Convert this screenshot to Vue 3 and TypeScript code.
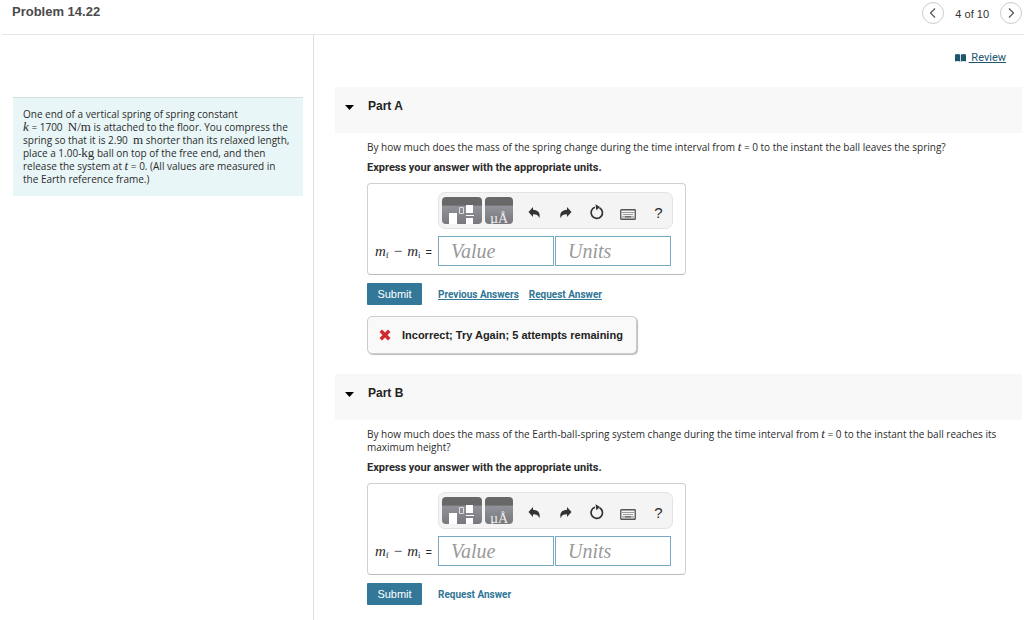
<script setup lang="ts">
import { reactive } from 'vue'

interface Part {
  id: string
  title: string
  before: string
  after: string
  hasPrevious: boolean
  feedback: string
}

const parts: Part[] = [
  {
    id: 'a',
    title: 'Part A',
    before: 'By how much does the mass of the spring change during the time interval from',
    after: 'to the instant the ball leaves the spring?',
    hasPrevious: true,
    feedback: 'Incorrect; Try Again; 5 attempts remaining',
  },
  {
    id: 'b',
    title: 'Part B',
    before: 'By how much does the mass of the Earth-ball-spring system change during the time interval from',
    after: 'to the instant the ball reaches its maximum height?',
    hasPrevious: false,
    feedback: '',
  },
]

const answers = reactive<Record<string, { value: string; units: string }>>({
  a: { value: '', units: '' },
  b: { value: '', units: '' },
})
const open = reactive<Record<string, boolean>>({ a: true, b: true })
</script>

<template>
  <div class="page">
    <header class="top">
      <h1>Problem 14.22</h1>
      <nav class="pager" aria-label="Problems">
        <button class="round" type="button" aria-label="Previous problem">
          <svg width="10" height="12" viewBox="0 0 10 12"><path d="M7 1.5 2.5 6 7 10.5" /></svg>
        </button>
        <span>4 of 10</span>
        <button class="round" type="button" aria-label="Next problem">
          <svg width="10" height="12" viewBox="0 0 10 12"><path d="M3 1.5 7.5 6 3 10.5" /></svg>
        </button>
      </nav>
    </header>

    <div class="columns">
      <aside class="side">
        <p class="statement">
          One end of a vertical spring of spring constant
          <span class="keep"><i class="var">k</i> = 1700 &nbsp;<span class="unit">N/m</span></span> is attached to the floor. You compress the spring so that it is
          <span class="keep">2.90 &nbsp;<span class="unit">m</span></span> shorter than its relaxed length, place a
          <span class="keep">1.00-<span class="unit">kg</span></span> ball on top of the free end, and then release the system at
          <span class="keep"><i class="var">t</i> = 0</span>. (All values are measured in the Earth reference frame.)
        </p>
      </aside>

      <main class="work">
        <div class="review">
          <svg width="11" height="8" viewBox="0 0 11 8" aria-hidden="true">
            <path d="M0 .6Q2.7-.5 5.1.6V7.5Q2.7 6.5 0 7.5ZM5.9.6Q8.5-.5 11 .6V7.5Q8.5 6.5 5.9 7.5Z" />
          </svg>
          <a href="#review">&nbsp;Review</a>
        </div>

        <section v-for="part in parts" :key="part.id" class="part">
          <h2>
            <button type="button" class="toggle" :aria-expanded="open[part.id]" @click="open[part.id] = !open[part.id]">
              <svg width="9" height="5" viewBox="0 0 9 5" aria-hidden="true"><path d="M0 0h9L4.500 5Z" /></svg>
              <span>{{ part.title }}</span>
            </button>
          </h2>

          <div v-if="open[part.id]" class="body">
            <p class="question">{{ part.before }} <span class="keep"><i class="var">t</i> = 0</span> {{ part.after }}</p>
            <p class="strong">Express your answer with the appropriate units.</p>

            <div class="answer">
              <div class="tools" role="toolbar" aria-label="Answer tools">
                <button type="button" class="tile wide" aria-label="Templates">
                  <svg width="40" height="27" viewBox="0 0 40 27">
                    <path d="M7 16h8v11H7ZM24 8h7v8h-7ZM24 18h8v1h-8ZM24 21h7v6h-7Z" fill="#fff" />
                    <path d="M17.500 10.500h4v6h-4Z" fill="none" stroke="#ddd" />
                  </svg>
                </button>
                <button type="button" class="tile" aria-label="Units"><span class="glyphs">µÅ</span></button>
                <span class="actions">
                  <button type="button" aria-label="Undo">
                    <svg width="13" height="13" viewBox="0 0 13 13"><path d="M5 1v2.800C10 4 12.800 7 11.300 12.200 10.300 9.200 8.500 8.300 5 8.300v2.700L.5 6Z" /></svg>
                  </button>
                  <button type="button" aria-label="Redo">
                    <svg width="13" height="13" viewBox="0 0 13 13"><path d="M8 1v2.800C3 4 .2 7 1.700 12.200 2.700 9.200 4.500 8.300 8 8.300v2.700L12.500 6Z" /></svg>
                  </button>
                  <button type="button" aria-label="Reset">
                    <svg width="15" height="16" viewBox="0 0 15 16">
                      <path d="M10.500 3.700A5.700 5.700 0 1 1 6 3.300" fill="none" stroke="#333" stroke-width="1.700" />
                      <path d="M6.500.3 11 3 7.300 6.300Z" />
                    </svg>
                  </button>
                  <button type="button" aria-label="Keyboard shortcuts">
                    <svg class="keys" width="16" height="11" viewBox="0 0 16 11">
                      <rect x=".75" y=".75" width="14.500" height="9.500" rx=".6" fill="#f4f4f4" stroke="#555" stroke-width="1.300" />
                      <path d="M2.500 3.500h11M3.500 5.500h10" fill="none" stroke="#444" stroke-width="1.200" stroke-dasharray="1 1" />
                      <path d="M2.500 7.800h1M4.500 7.800h7M12.500 7.800h1" fill="none" stroke="#444" stroke-width="1.200" />
                    </svg>
                  </button>
                  <button type="button" class="help" aria-label="Help">?</button>
                </span>
              </div>
              <label class="lhs" :for="`value-${part.id}`">
                <span><i>m</i><sub>f</sub></span><span>−</span><span><i>m</i><sub>i</sub></span><span class="eq">=</span>
              </label>
              <div class="fields">
                <input :id="`value-${part.id}`" v-model="answers[part.id].value" type="text" placeholder="Value">
                <input v-model="answers[part.id].units" type="text" placeholder="Units" aria-label="Units">
              </div>
            </div>

            <div class="row">
              <button type="button" class="submit">Submit</button>
              <a v-if="part.hasPrevious" href="#previous">Previous Answers</a>
              <a href="#request" :class="{ plain: !part.hasPrevious }">Request Answer</a>
            </div>

            <div v-if="part.feedback" class="feedback" role="status">
              <svg width="12" height="12" viewBox="0 0 12 12" aria-hidden="true"><path d="M3 0.500 6 3.500 9 .5 11.500 3 8.500 6 11.500 9 9 11.500 6 8.500 3 11.500.5 9 3.500 6 .5 3Z" /></svg>
              <span>{{ part.feedback }}</span>
            </div>
          </div>
        </section>
      </main>
    </div>
  </div>
</template>

<style>
body { margin: 0; background: #fff; }
</style>

<style scoped>
.page {
  min-height: 100vh;
  display: flex;
  flex-direction: column;
  color: #2b2b2b;
  font: 11px/13px Roboto, "Liberation Sans", sans-serif;
}
* { box-sizing: border-box; }
h1, h2, p { margin: 0; }
button { font-family: "Liberation Sans", Arial, sans-serif; color: inherit; cursor: pointer; }
svg { display: block; }
.top {
  display: flex;
  justify-content: space-between;
  align-items: flex-start;
  height: 35px;
  margin-left: 2px;
  padding: 2px 2px 0 10px;
  border-bottom: 1px solid #e4e6e8;
  font-family: "Liberation Sans", Arial, sans-serif;
}
h1 { font-size: 13px; line-height: 20px; color: #4a4a4a; }
.pager { display: flex; align-items: center; gap: 11px; font-size: 11px; color: #333; }
.pager span { padding-top: 2px; }
.round {
  display: grid;
  place-items: center;
  width: 22px;
  height: 22px;
  padding: 0;
  border: 1px solid #ccc;
  border-radius: 50%;
  background: #fff;
}
.round path { fill: none; stroke: #555; stroke-width: 1.2; }
.columns { flex: 1; display: grid; grid-template-columns: 314px 1fr; }
.side { padding: 62px 10px 0 13px; border-right: 1px solid #d9dfe5; }
.statement, .question { font: 10px/13px "Open Sans", "Liberation Sans", sans-serif; }
.statement {
  padding: 10px;
  border-top: 1px solid #d5dcdc;
  background: #e9f6f7;
}
.keep { white-space: nowrap; }
.var, .unit { font-family: "Liberation Serif", serif; font-size: 13px; line-height: 10px; }
.work { padding: 16px 2px 15px 21px; }
.review { display: flex; align-items: center; gap: 3px; justify-content: flex-end; padding: 0 16px 23px 0; }
.review a { color: #1d566d; }
.review path { fill: #1d566d; }
.part + .part { margin-top: 20px; }
h2 { background: #f8f8f8; font-size: 12px; }
.toggle {
  display: flex;
  align-items: center;
  gap: 14px;
  width: 100%;
  height: 46px;
  padding: 0 0 8px 10px;
  border: 0;
  background: none;
  font-size: 12px;
  font-weight: bold;
  color: #222;
}
.toggle svg { margin-top: 3px; }
.body { padding: 8px 20px 0 32px; }
.strong { margin-top: 7px; font-weight: bold; }
.answer {
  display: grid;
  grid-template-columns: 62px 235px;
  row-gap: 7px;
  width: 319px;
  margin-top: 9px;
  padding: 8px;
  border: 1px solid #d0d0d0;
  border-bottom-color: #bbb;
  border-radius: 4px;
}
.tools {
  grid-column: 2;
  display: flex;
  height: 37px;
  padding: 4px 0 4px 3px;
  border: 1px solid #e3e3e3;
  border-radius: 7px;
  background: #f4f4f4;
}
.tools button { padding: 0; border: 0; background: none; }
.tools .tile {
  flex: none;
  width: 28px;
  height: 27px;
  border-radius: 4px;
  background: linear-gradient(#686868 0 30%, #92929a 34%, #77777d);
  overflow: hidden;
}
.tools .wide { width: 40px; margin-right: 3px; }
.glyphs { display: block; padding-top: 14px; color: #eee; font: 14px/16px "Liberation Serif", serif; }
.actions { flex: 1; display: grid; grid-template-columns: repeat(5, 31px); margin-left: 6px; fill: #333; }
.actions button { display: grid; place-items: center; height: 30px; }
.actions .keys { margin-top: 4px; }
.tools .help { font-size: 15px; }
.lhs {
  display: flex;
  align-items: baseline;
  justify-content: flex-end;
  gap: 5px;
  align-self: center;
  padding-right: 6px;
  font: 15px/16px "Liberation Serif", serif;
  white-space: nowrap;
}
.lhs sub { font-size: 9px; line-height: 1px; vertical-align: -2px; }
.lhs .eq { font: 11px "Liberation Sans", sans-serif; }
.fields { display: flex; gap: 1px; padding-right: 2px; }
input {
  flex: 1;
  min-width: 0;
  height: 30px;
  padding: 0 12px;
  border: 1px solid #78a9c2;
  background: #fff;
  font: italic 20px "Liberation Serif", serif;
}
input::placeholder { color: #999; opacity: 1; }
.row { display: flex; align-items: center; margin-top: 8px; }
.submit {
  width: 55px;
  height: 22px;
  margin-right: 16px;
  padding: 0;
  border: 0;
  border-radius: 1px;
  background: #347899;
  color: #fff;
  font-size: 11px;
}
.row a { margin-right: 10px; color: #2f7595; font-size: 10px; font-weight: bold; }
.row .plain { text-decoration: none; }
.feedback {
  display: flex;
  align-items: center;
  gap: 11px;
  width: fit-content;
  height: 38px;
  margin-top: 11px;
  padding: 0 13px 0 11px;
  border: 1px solid #ccc;
  border-radius: 5px;
  background: #f9f9f9;
  box-shadow: 1px 1px 1px #bbb;
  font: bold 11px/13px "Liberation Sans", Arial, sans-serif;
  color: #222;
}
.feedback path { fill: #cf2a2f; }
</style>
